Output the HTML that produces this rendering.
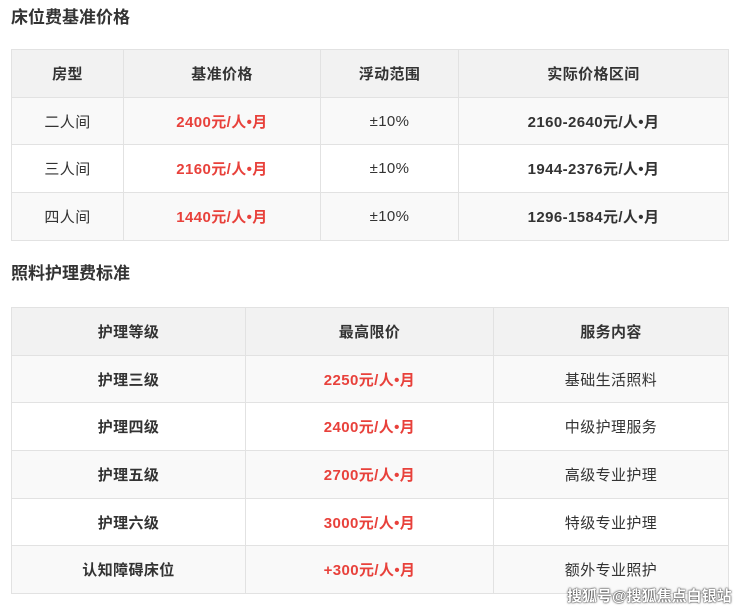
<!DOCTYPE html>
<html><head><meta charset="utf-8"><style>
body{margin:0;width:740px;height:611px;background:#fff;font-family:"Liberation Sans","Noto Sans CJK SC",sans-serif;color:#333;position:relative;overflow:hidden}
h2{position:absolute;left:11px;margin:0;font-size:17px;font-weight:bold;color:#333;line-height:24px}
table{position:absolute;left:11px;width:718px;border-collapse:collapse;font-size:15px;letter-spacing:0.4px}
td,th{border:1px solid #e2e2e2;text-align:center;padding:0;height:46.7px}
th{background:#f2f2f2;font-weight:bold;color:#333}
tr.g td{background:#f9f9f9}
.r{color:#e8413b;font-weight:bold}
.b{font-weight:bold}
.wm{position:absolute;left:567px;top:585px;font-size:15px;font-weight:bold;color:#fff;text-shadow:0 0 2px #333,0 0 1px #000}
</style></head><body>
<h2 style="top:6px">床位费基准价格</h2>
<table style="top:49px">
<tr><th style="width:111px">房型</th><th style="width:196px">基准价格</th><th style="width:137px">浮动范围</th><th>实际价格区间</th></tr>
<tr class="g"><td>二人间</td><td class="r">2400元/人•月</td><td>±10%</td><td class="b">2160-2640元/人•月</td></tr>
<tr><td>三人间</td><td class="r">2160元/人•月</td><td>±10%</td><td class="b">1944-2376元/人•月</td></tr>
<tr class="g"><td>四人间</td><td class="r">1440元/人•月</td><td>±10%</td><td class="b">1296-1584元/人•月</td></tr>
</table>
<h2 style="top:262px">照料护理费标准</h2>
<table style="top:307px">
<tr><th style="width:233px">护理等级</th><th style="width:247px">最高限价</th><th>服务内容</th></tr>
<tr class="g"><td class="b">护理三级</td><td class="r">2250元/人•月</td><td>基础生活照料</td></tr>
<tr><td class="b">护理四级</td><td class="r">2400元/人•月</td><td>中级护理服务</td></tr>
<tr class="g"><td class="b">护理五级</td><td class="r">2700元/人•月</td><td>高级专业护理</td></tr>
<tr><td class="b">护理六级</td><td class="r">3000元/人•月</td><td>特级专业护理</td></tr>
<tr class="g"><td class="b">认知障碍床位</td><td class="r">+300元/人•月</td><td>额外专业照护</td></tr>
</table>
<div class="wm">搜狐号@搜狐焦点白银站</div>
</body></html>
